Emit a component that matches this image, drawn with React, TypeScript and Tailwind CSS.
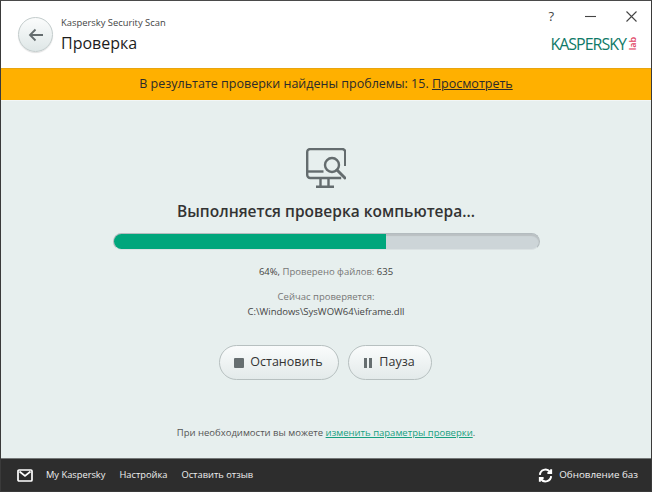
import React from "react";

export default function App() {
  return (
    <div className="w-[652px] h-[492px] flex flex-col border border-[#3a3a3a] border-t-[#4a4a4a] bg-[#e7efee] overflow-hidden font-['Open_Sans','Noto_Sans',sans-serif] text-[#333]">
      <header className="h-[67px] bg-white flex items-start shrink-0">
        <div className="mt-[16px] ml-[17px] w-[35px] h-[35px] rounded-full border border-[#c3cccc] bg-gradient-to-b from-[#fbfcfc] to-[#dfe7e7] flex items-center justify-center shadow-[0_1px_1px_rgba(0,0,0,0.12)]">
          <svg width="16" height="14" viewBox="0 0 16 14" fill="none" stroke="#646c6e" strokeWidth="1.8">
            <path d="M15 7H2M7.5 1.5 2 7l5.5 5.5" />
          </svg>
        </div>
        <div className="ml-[8px] mt-[15px] flex flex-col">
          <span className="text-[9.4px] leading-[14px] text-[#444]">Kaspersky Security Scan</span>
          <span className="text-[16px] leading-[22px] text-[#1c1c1c] mt-[2px] font-medium">Проверка</span>
        </div>
        <div className="ml-auto mr-[14px] flex flex-col items-end">
          <div className="flex items-center h-[30px] gap-[30px]">
            <span className="text-[13px] text-[#444] leading-none mr-[1px]">?</span>
            <svg width="11" height="11" viewBox="0 0 11 11" stroke="#444" strokeWidth="1.1" fill="none"><path d="M0 5.5h11" /></svg>
            <svg width="11" height="11" viewBox="0 0 11 11" stroke="#444" strokeWidth="1.1" fill="none"><path d="M.5.5l10 10M10.5.5l-10 10" /></svg>
          </div>
          <div className="flex items-center h-[16px] mt-[5px]">
            <span className="text-[16px] leading-[16px] tracking-[-1px] text-[#0f7a68] font-medium">KASPERSKY</span>
            <span className="text-[9px] leading-none text-[#e0405f] [writing-mode:vertical-rl] rotate-180 ml-[2px] font-semibold">lab</span>
          </div>
        </div>
      </header>

      <div className="h-[32px] bg-[#ffb000] border-t border-[#e9a50f] flex items-center justify-center text-[12.5px] text-[#2b2b2b] shrink-0">
        <span>В результате проверки найдены проблемы: 15.&nbsp;</span>
        <span className="underline">Просмотреть</span>
      </div>

      <main className="flex-1 flex flex-col items-center border-t border-[#f2f6f6]">
        <svg width="40" height="40" viewBox="0 0 40 40" fill="none" stroke="#646c6e" strokeWidth="2.4" className="mt-[47px]">
          <path d="M1.200 4a3 3 0 0 1 3-3h32a3 3 0 0 1 3 3v14M1.200 4v23a3 3 0 0 0 3 3h31" />
          <path d="M1.500 23.500h16" />
          <path d="M14.500 30v8M22.500 30v8M10 38.800h18" />
          <circle cx="26" cy="17" r="7" fill="#e7efee" />
          <path d="M31 22l8 8" strokeWidth="3" strokeLinecap="round" />
        </svg>
        <h1 className="text-[15.500px] leading-[22px] mt-[12px] text-[#333] font-semibold">Выполняется проверка компьютера...</h1>
        <div className="w-[427px] h-[17px] mt-[11px] rounded-full bg-[#cdd5d8] border border-[#b4bcbf] border-b-[#dbe2e3] overflow-hidden flex shadow-[inset_0_2px_1px_rgba(130,130,130,0.25)]">
          <div className="w-[64%] bg-[#00a67c]" />
        </div>
        <div className="text-[9.5px] leading-[13px] mt-[15px] text-[#444]">64%, <span className="text-[#777]">Проверено файлов:</span> 635</div>
        <div className="text-[9.5px] leading-[13px] mt-[12px] text-[#777]">Сейчас проверяется:</div>
        <div className="text-[9.5px] leading-[13px] mt-[2px] text-[#444]">C:\Windows\SysWOW64\ieframe.dll</div>
        <div className="flex gap-[9px] mt-[27px] mr-[2px]">
          <button className="w-[120px] h-[35px] rounded-full border border-[#b7c0c0] bg-gradient-to-b from-[#fafcfc] to-[#e3eaea] flex items-center justify-center gap-[6px] text-[12.5px] text-[#333]">
            <span className="w-[10px] h-[10px] rounded-[1px] bg-[#666e70]" />Остановить
          </button>
          <button className="w-[84px] h-[35px] rounded-full border border-[#b7c0c0] bg-gradient-to-b from-[#fafcfc] to-[#e3eaea] flex items-center justify-center gap-[7px] text-[12.5px] text-[#333]">
            <span className="flex gap-[2px]"><span className="w-[3px] h-[10px] bg-[#666e70]" /><span className="w-[3px] h-[10px] bg-[#666e70]" /></span>Пауза
          </button>
        </div>
        <div className="text-[9.5px] leading-[13px] mt-[46px] text-[#555]">При необходимости вы можете <span className="underline text-[#17a080]">изменить параметры проверки</span>.</div>
      </main>

      <footer className="h-[33px] bg-[#2d2d2d] flex items-center text-[9.300px] text-[#f0f0f0] shrink-0 pl-[16px] pr-[13px] border-t border-[#dfe6e6]/40">
        <svg width="16" height="13" viewBox="0 0 16 13" fill="none" stroke="#fff" strokeWidth="1.7" className="mr-[13px]">
          <rect x="1" y="1" width="14" height="11" rx="1" />
          <path d="M2.500 2.500 8 7l5.500-4.500" />
        </svg>
        <span>My Kaspersky</span>
        <span className="ml-[14px]">Настройка</span>
        <span className="ml-[14px]">Оставить отзыв</span>
        <span className="ml-auto flex items-center gap-[6px] text-[9.800px]">
          <svg width="15" height="15" viewBox="0 0 24 24" fill="none" stroke="#fff" strokeWidth="3.200">
            <path d="M3 11a9 9 0 0 1 16-5l2 2M21 2v6h-6M21 13a9 9 0 0 1-16 5l-2-2M3 22v-6h6" />
          </svg>
          <span>Обновление баз</span>
        </span>
      </footer>
    </div>
  );
}
